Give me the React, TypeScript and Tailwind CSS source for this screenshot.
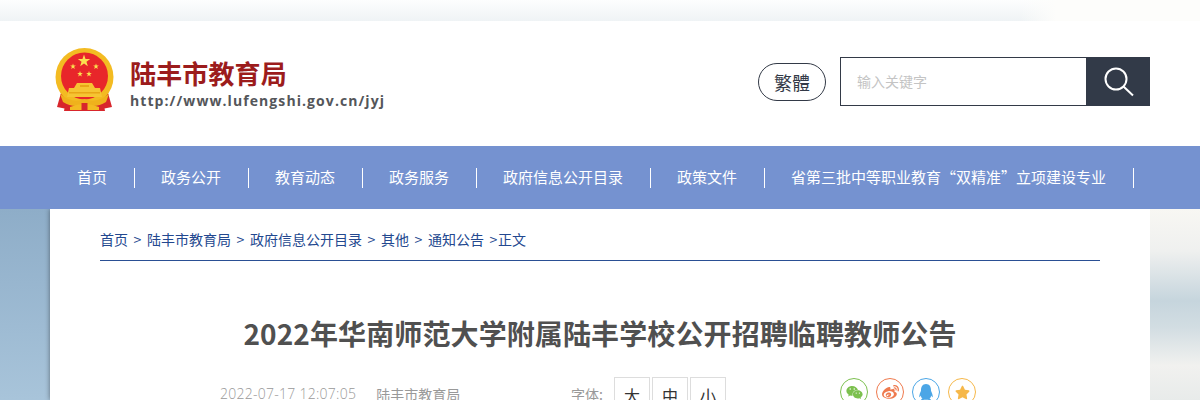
import React from "react";
import { FaWeixin, FaWeibo, FaQq, FaStar } from "react-icons/fa";

const cjk = { fontFamily: '"Noto Sans CJK SC", sans-serif' };
const latin = { fontFamily: '"Open Sans", "Noto Sans CJK SC", sans-serif' };

function Emblem() {
  const star = (cx: number, cy: number, r: number) => {
    const pts: string[] = [];
    for (let i = 0; i < 10; i++) {
      const a = -Math.PI / 2 + (i * Math.PI) / 5;
      const rr = i % 2 ? r * 0.4 : r;
      pts.push(`${cx + rr * Math.cos(a)},${cy + rr * Math.sin(a)}`);
    }
    return <polygon points={pts.join(" ")} fill="#fbe04f" />;
  };
  return (
    <svg width="60" height="66" viewBox="0 0 60 66">
      <path d="M6 46 L2 60 L12 62 L16 52 Z" fill="#d8262c" />
      <path d="M53 46 L57 60 L47 62 L43 52 Z" fill="#d8262c" />
      <path d="M11 54 L9 64 L50 64 L48 54 Z" fill="#d8262c" />
      <circle cx="29.5" cy="30" r="29" fill="#f3bb22" />
      <circle cx="29.5" cy="29" r="23.5" fill="#e8262a" />
      {star(29, 14, 6.5)}
      {star(18, 19.5, 3)}
      {star(41, 19.5, 3)}
      {star(25, 27, 3)}
      {star(34, 27, 3)}
      <path d="M14 41 H45 L47 50 H12 Z" fill="#f6c533" />
      <path d="M22 36 H37 L40 41 H19 Z" fill="#f6c533" />
      <rect x="25" y="38" width="9" height="2" fill="#e8a617" />
      <rect x="14" y="45" width="31" height="1.5" fill="#e8a617" />
      <path d="M5 47 Q18 57 29.5 52 Q41 57 54 47 L51 55 Q40 62 29.5 57 Q19 62 8 55 Z" fill="#efb21c" />
      <path d="M15 60 Q29.5 54 44 60 L44 63 L15 63 Z" fill="#f3bb22" />
      <rect x="26.5" y="56" width="6" height="8" fill="#d8262c" />
    </svg>
  );
}

function Social({ color, children }: { color: string; children: React.ReactNode }) {
  return (
    <div
      className="flex h-7 w-7 items-center justify-center rounded-full border bg-white"
      style={{ borderColor: color, color }}
    >
      {children}
    </div>
  );
}

const navItems = [
  "首页",
  "政务公开",
  "教育动态",
  "政务服务",
  "政府信息公开目录",
  "政策文件",
  "省第三批中等职业教育“双精准”立项建设专业",
];

const crumbs = ["首页", "陆丰市教育局", "政府信息公开目录", "其他", "通知公告"];

export default function App() {
  return (
    <div className="h-[400px] w-[1200px] overflow-hidden bg-white" style={cjk}>
      <div className="h-[21px] bg-[linear-gradient(90deg,transparent_85%,#fdfdfb_88%),linear-gradient(180deg,#fdfefe,#eff3f5)]" />
      <header className="flex h-[125px] items-start bg-white">
        <div className="ml-[55px] mt-[26px] flex items-start gap-[15px]">
          <Emblem />
          <div className="flex flex-col pt-[9px]">
            <div className="text-[26px] font-bold leading-[34px] tracking-[0.15px] text-[#9c1c1c]">陆丰市教育局</div>
            <div className="mt-[2px] text-[14px] font-bold leading-[18px] tracking-[1.08px] text-[#54565a]" style={latin}>
              http://www.lufengshi.gov.cn/jyj
            </div>
          </div>
        </div>
        <div className="ml-auto mr-[50px] mt-[36px] flex items-start gap-[14px]">
          <div className="mt-[6px] flex h-[38px] w-[68px] items-center justify-center rounded-[19px] border border-[#333a47] text-[18px] text-[#333a47]">
            繁體
          </div>
          <div className="flex h-[49px] w-[310px]">
            <div className="flex h-full w-[247px] items-center border border-[#333a47] pl-[16px] text-[14px] text-[#c4c4c4]">
              输入关键字
            </div>
            <div className="flex h-full w-[63px] items-center justify-center bg-[#323a48]">
              <svg width="32" height="32" viewBox="0 0 32 32" fill="none" stroke="#fff" strokeWidth="2">
                <circle cx="13" cy="13" r="10.5" />
                <path d="M20.5 20.5 L30 29.5" />
              </svg>
            </div>
          </div>
        </div>
      </header>
      <nav className="relative z-10 flex h-[63px] items-center bg-[#7592d0] pl-[50px] text-[15px] text-white">
        {navItems.map((n) => (
          <div key={n} className="-mr-px flex h-[20px] items-center whitespace-nowrap border-r border-white px-[27px]">
            {n}
          </div>
        ))}
      </nav>
      <div className="flex h-[191px]">
        <div className="w-[50px] bg-gradient-to-b from-[#8eadc8] to-[#a8c4da]" />
        <main className="w-[1100px] bg-white px-[50px] shadow-[0_0_5px_rgba(0,0,0,0.45)]">
          <div className="flex h-[52px] items-center border-b border-[#2a4f94] pb-[2px] pt-[11px] text-[14px] text-[#23488f]">
            {crumbs.map((c) => (
              <React.Fragment key={c}>
                <span>{c}</span>
                <span className="mx-[5px] inline-block w-[9px] text-center">{">"}</span>
              </React.Fragment>
            ))}
            <span className="-ml-[5px]">正文</span>
          </div>
          <h1 className="mt-[52px] text-center text-[28px] font-bold leading-[40px] tracking-[0.11px] text-[#505050]">
            2022年华南师范大学附属陆丰学校公开招聘临聘教师公告
          </h1>
          <div className="mt-[24px] flex items-start text-[14px] text-[#999999]">
            <div className="ml-[120px] flex w-[351px] gap-[20px] pt-[7px] leading-[20px]">
              <span className="font-light tracking-[0.26px]" style={latin}>2022-07-17 12:07:05</span>
              <span>陆丰市教育局</span>
            </div>
            <div className="flex w-[269px] items-start">
              <span className="w-[43px] pt-[7px] leading-[20px]">字体:</span>
              <div className="flex gap-[2px] text-[16px] text-[#333333]">
                {["大", "中", "小"].map((s) => (
                  <div key={s} className="flex h-[36px] w-[36px] items-center justify-center border border-[#dddddd]">
                    {s}
                  </div>
                ))}
              </div>
            </div>
            <div className="mt-[1px] flex gap-[8px]">
              <Social color="#7cc04f"><FaWeixin size={17} /></Social>
              <Social color="#ef7a4e"><FaWeibo size={17} /></Social>
              <Social color="#4ba6e6"><FaQq size={16} /></Social>
              <Social color="#f6b84a"><FaStar size={15} /></Social>
            </div>
          </div>
        </main>
        <div className="w-[50px] bg-[linear-gradient(180deg,#f8f7f3_0%,#eff0ef_22%,#c6d5dd_48%,#d2dde2_62%,#f1f1ef_82%,#e8ebea_100%)]" />
      </div>
    </div>
  );
}
